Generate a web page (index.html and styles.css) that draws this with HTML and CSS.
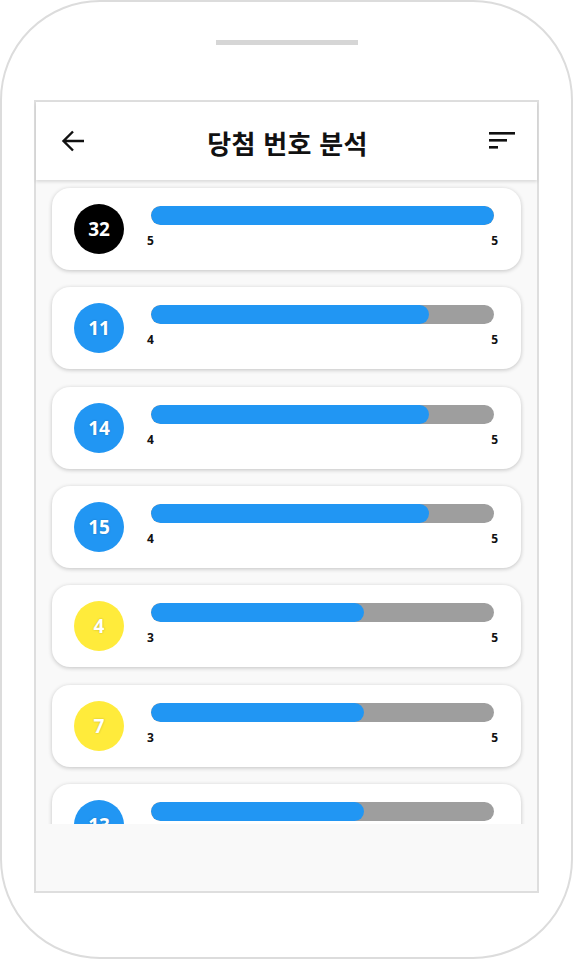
FILE: index.html
```html
<!DOCTYPE html>
<html lang="ko">
<head>
    <meta charset="UTF-8">
    <meta name="viewport" content="width=device-width, initial-scale=1.0">
    <title>당첨 번호 분석</title>
    <link rel="stylesheet" href="styles.css">
</head>
<body>
    <div class="phone">
        <div class="speaker"></div>
        <div class="screen">
            <div class="app-bar">
                <svg class="icon-back" width="26" height="26" viewBox="0 0 26 26">
                    <path d="M24 13H3.5M13 3.5L3.5 13l9.5 9.5" fill="none" stroke="#111" stroke-width="2.4"/>
                </svg>
                <h1 class="title">당첨 번호 분석</h1>
                <svg class="icon-sort" width="28" height="18" viewBox="0 0 28 18">
                    <rect x="0" y="1" width="26" height="2.6" fill="#111"/>
                    <rect x="0" y="8" width="18" height="2.6" fill="#111"/>
                    <rect x="0" y="15" width="9" height="2.6" fill="#111"/>
                </svg>
            </div>

            <div class="list">
                <div class="card">
                    <div class="ball ball-black">32</div>
                    <div class="stat">
                        <div class="bar"><div class="fill" style="width: 100%"></div></div>
                        <div class="labels"><span>5</span><span>5</span></div>
                    </div>
                </div>
                <div class="card">
                    <div class="ball ball-blue">11</div>
                    <div class="stat">
                        <div class="bar"><div class="fill" style="width: 81%"></div></div>
                        <div class="labels"><span>4</span><span>5</span></div>
                    </div>
                </div>
                <div class="card">
                    <div class="ball ball-blue">14</div>
                    <div class="stat">
                        <div class="bar"><div class="fill" style="width: 81%"></div></div>
                        <div class="labels"><span>4</span><span>5</span></div>
                    </div>
                </div>
                <div class="card">
                    <div class="ball ball-blue">15</div>
                    <div class="stat">
                        <div class="bar"><div class="fill" style="width: 81%"></div></div>
                        <div class="labels"><span>4</span><span>5</span></div>
                    </div>
                </div>
                <div class="card">
                    <div class="ball ball-yellow">4</div>
                    <div class="stat">
                        <div class="bar"><div class="fill" style="width: 62%"></div></div>
                        <div class="labels"><span>3</span><span>5</span></div>
                    </div>
                </div>
                <div class="card">
                    <div class="ball ball-yellow">7</div>
                    <div class="stat">
                        <div class="bar"><div class="fill" style="width: 62%"></div></div>
                        <div class="labels"><span>3</span><span>5</span></div>
                    </div>
                </div>
                <div class="card">
                    <div class="ball ball-blue">13</div>
                    <div class="stat">
                        <div class="bar"><div class="fill" style="width: 62%"></div></div>
                        <div class="labels"><span>3</span><span>5</span></div>
                    </div>
                </div>
            </div>
            <div class="bottom-space"></div>
        </div>
    </div>
</body>
</html>
```

FILE: styles.css
```css
body {
    margin: 0;
    padding: 0;
    background-color: white;
    font-family: "Noto Sans", "Noto Sans CJK KR", sans-serif;
}

.phone {
    box-sizing: border-box;
    width: 573px;
    height: 959px;
    border: 2px solid #dcdcdc;
    border-radius: 100px;
    padding-top: 38px;
    display: flex;
    flex-direction: column;
    align-items: center;
}

.speaker {
    width: 142px;
    height: 5px;
    background-color: #d6d6d6;
    margin-left: 1px;
}

.screen {
    box-sizing: border-box;
    width: 505px;
    height: 793px;
    margin-top: 55px;
    border: 2px solid #dedede;
    background-color: #f9f9f9;
    display: flex;
    flex-direction: column;
}

.app-bar {
    height: 78px;
    flex-shrink: 0;
    background-color: white;
    display: flex;
    align-items: center;
    justify-content: space-between;
    padding: 0 20px 0 24px;
    box-shadow: 0 2px 3px rgba(0, 0, 0, 0.12);
    position: relative;
    z-index: 1;
}

.title {
    margin: 3px 0 0 0;
    font-family: "Noto Sans CJK KR", sans-serif;
    font-size: 26px;
    font-weight: 700;
    color: #111;
    letter-spacing: 0.3px;
}

.icon-sort {
    margin-top: -2px;
}

.list {
    height: 644px;
    overflow: hidden;
    padding: 8px 16px 0 16px;
    box-sizing: border-box;
    display: flex;
    flex-direction: column;
    gap: 17.33px;
}

.card {
    flex-shrink: 0;
    height: 82px;
    box-sizing: border-box;
    background-color: white;
    border-radius: 18px;
    box-shadow: 0 1px 4px rgba(0, 0, 0, 0.22);
    display: flex;
    align-items: center;
    padding: 0 27px 0 22px;
}

.ball {
    width: 50px;
    height: 50px;
    border-radius: 50%;
    flex-shrink: 0;
    display: flex;
    align-items: center;
    justify-content: center;
    color: white;
    font-family: "Open Sans", "Noto Sans", sans-serif;
    font-size: 19px;
    font-weight: 700;
    text-shadow: 0 0 2px rgba(0, 0, 0, 0.25);
}

.ball-black {
    background-color: #000;
}

.ball-blue {
    background-color: #2196f3;
}

.ball-yellow {
    background-color: #ffeb3b;
}

.stat {
    flex: 1;
    margin-left: 27px;
    align-self: flex-start;
    margin-top: 18px;
}

.bar {
    height: 19px;
    border-radius: 10px;
    background-color: #9e9e9e;
    overflow: hidden;
}

.fill {
    height: 100%;
    border-radius: 10px;
    background-color: #2196f3;
}

.labels {
    display: flex;
    justify-content: space-between;
    margin: 7px -4px 0 -4px;
    font-family: "Open Sans", "Noto Sans", sans-serif;
    font-size: 12px;
    font-weight: 700;
    color: #111;
}

.bottom-space {
    flex: 1;
    background-color: #f9f9f9;
}
```
